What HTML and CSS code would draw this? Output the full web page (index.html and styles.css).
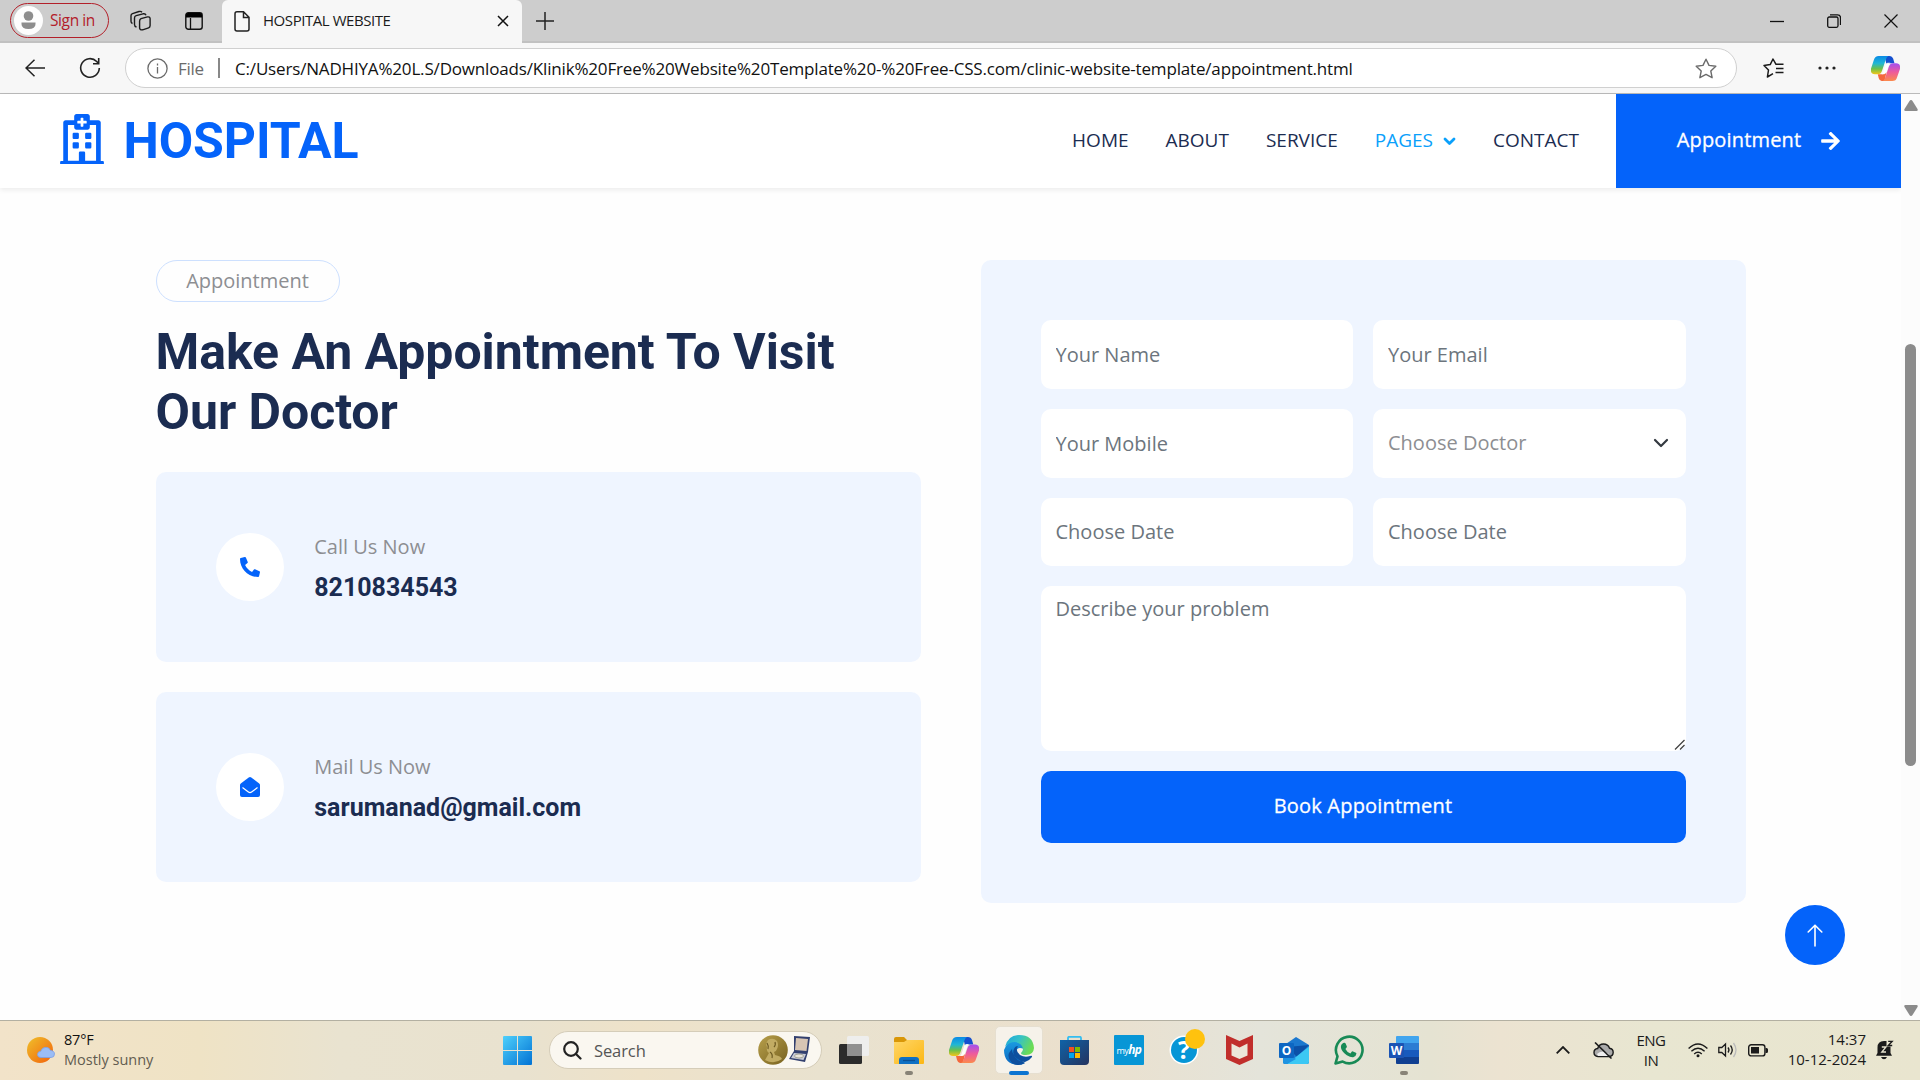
FILE: index.html
```html
<!DOCTYPE html>
<html lang="en">
<head>
<meta charset="utf-8">
<title>HOSPITAL WEBSITE</title>
<link rel="stylesheet" href="styles.css">
</head>
<body>
<svg width="0" height="0" class="defs">
  <defs>
    <linearGradient id="cpA" x1="0" y1="0" x2="0" y2="1"><stop offset="0" stop-color="#0a8ae6"/><stop offset=".4" stop-color="#1fb6d6"/><stop offset=".7" stop-color="#6cc04a"/><stop offset="1" stop-color="#f5c518"/></linearGradient>
    <linearGradient id="cpB" x1="0" y1="0" x2="0" y2="1"><stop offset="0" stop-color="#a14ff0"/><stop offset=".5" stop-color="#ee5a9c"/><stop offset="1" stop-color="#fb8a4c"/></linearGradient>
    <linearGradient id="edA" x1="0" y1="0" x2="1" y2=".4"><stop offset="0" stop-color="#1aa5dc"/><stop offset=".5" stop-color="#35c1c8"/><stop offset="1" stop-color="#6bdc55"/></linearGradient>
    <linearGradient id="edB" x1="0" y1="0" x2="0" y2="1"><stop offset="0" stop-color="#1b9de2"/><stop offset="1" stop-color="#0b66c0"/></linearGradient>
    <linearGradient id="sun" x1="0" y1="0" x2="1" y2="1"><stop offset="0" stop-color="#efc02b"/><stop offset="1" stop-color="#f2610c"/></linearGradient>
    <linearGradient id="win" x1="0" y1="0" x2="1" y2="1"><stop offset="0" stop-color="#4fd0fb"/><stop offset="1" stop-color="#0172d4"/></linearGradient>
    <linearGradient id="fold" x1="0" y1="0" x2="1" y2="1"><stop offset="0" stop-color="#ffd667"/><stop offset="1" stop-color="#fcb714"/></linearGradient>
    <linearGradient id="coin" x1="0" y1="0" x2="1" y2="1"><stop offset="0" stop-color="#b8a04c"/><stop offset="1" stop-color="#77611e"/></linearGradient>
    <linearGradient id="store" x1="0" y1="0" x2="1" y2="1"><stop offset="0" stop-color="#0f63a8"/><stop offset="1" stop-color="#25345f"/></linearGradient>
    <symbol id="copilot" viewBox="0 0 30 28">
      <path fill="#1450cf" d="M14 1h5q3 0 4 3l1.300 4.500H20l-4 1z"/>
      <path fill="#f4673c" d="M7 20h5l4-2-2 9h-3q-2 0-3-3z"/>
      <path fill="url(#cpA)" d="M8 1h10q-2 1-2.800 4l-3.700 11q-1.200 4-4.500 4H4q-5 0-4-6L3 5q1-4 5-4z"/>
      <path fill="url(#cpB)" d="M22 27H12q2-1 2.800-4l3.700-11q1.200-3.500 4.500-3.500h3q5 0 4 6l-3 8.500q-1 4-5 4z"/>
      <path fill="#fff" d="M15.300 9.500q.7-1.500 2.200-1.500H20q-1.200 1-1.800 3l-2.400 7q-.7 2-2.300 2H11q1-.8 1.500-2z" opacity=".9"/>
    </symbol>
  </defs>
</svg>

<header class="tabbar">
  <div class="signin">
    <svg width="29" height="29" viewBox="0 0 29 29"><circle cx="14.500" cy="14.500" r="14.500" fill="#fdfdfd"/><circle cx="14.500" cy="10" r="4.800" fill="#8d8d8d"/><path d="M7.500 16.500h14v1.500q0 5-7 5t-7-5z" fill="#8d8d8d"/></svg>
    <span>Sign in</span>
  </div>
  <svg class="ic-spaces" width="22" height="22" viewBox="0 0 22 22" fill="none" stroke="#1b1b1b" stroke-width="1.400" stroke-linejoin="round"><path d="M11 8.700l6.500-1.800q2.300-.4 2.600 1.600v7q0 1.800-1.500 2.300l-6 2q-2.600.5-3-1.600v-7q0-1.800 1.400-2.500zM6.500 17q-2-.5-2-2.500V8q0-1.800 1.700-2.300L13 3.800q2.400-.5 3 1.400M2.500 13.500q-1.500-.7-1.500-2.200V5.800q0-1.600 1.500-2.200L9 1.500q2-.5 3 .7"/></svg>
  <svg class="ic-tabs" width="18" height="18" viewBox="0 0 18 18"><rect x=".8" y=".8" width="16.400" height="16.400" rx="2.500" fill="none" stroke="#111" stroke-width="1.400"/><path d="M1 2.500Q1 1 3 1h12q2 0 2 1.500V5.500H1z" fill="#000"/><path d="M5.500 6v11" stroke="#111" stroke-width="1.300"/></svg>
  <div class="tab">
    <svg width="16" height="21" viewBox="0 0 16 21" fill="none" stroke="#222" stroke-width="1.500"><path d="M3 .8h6.500L15 6.300V18q0 2-2 2H3q-2 0-2-2V2.800q0-2 2-2zM9.500 1v5.500H15"/></svg>
    <span>HOSPITAL WEBSITE</span>
    <svg class="tab-x" width="12" height="12" viewBox="0 0 12 12" stroke="#111" stroke-width="1.500"><path d="M1 1l10 10M11 1L1 11"/></svg>
  </div>
  <svg class="ic-plus" width="18" height="18" viewBox="0 0 18 18" stroke="#222" stroke-width="1.500"><path d="M9 0v18M0 9h18"/></svg>
  <div class="winctl">
    <svg width="14" height="14" viewBox="0 0 14 14" stroke="#111" stroke-width="1.300"><path d="M0 7.500h14"/></svg>
    <svg width="14" height="14" viewBox="0 0 14 14" fill="none" stroke="#111" stroke-width="1.300"><rect x=".7" y="3" width="10.300" height="10.300" rx="1.500"/><path d="M3 .8h7.500q3 0 3 3V11"/></svg>
    <svg width="14" height="14" viewBox="0 0 14 14" stroke="#111" stroke-width="1.200"><path d="M.5.500l13 13M13.500.500l-13 13"/></svg>
  </div>
</header>

<div class="toolbar">
  <svg class="ic-back" width="20" height="18" viewBox="0 0 20 18" fill="none" stroke="#222" stroke-width="1.500"><path d="M20 9H1M9.500.700L1 9l8.500 8.300"/></svg>
  <svg class="ic-reload" width="22" height="22" viewBox="0 0 22 22" fill="none" stroke="#222" stroke-width="1.600"><path d="M20.300 11a9.300 9.300 0 1 1-2.600-6.500l1.800 2M19.700 1v5.700H14"/></svg>
  <div class="address">
    <svg width="21" height="21" viewBox="0 0 21 21" fill="none" stroke="#6b6b6b" stroke-width="1.300"><circle cx="10.500" cy="10.500" r="9.600"/><path d="M10.500 9v6.500M10.500 5.500v2"/></svg>
    <span class="scheme">File</span>
    <i class="sep"></i>
    <span class="url">C:/Users/NADHIYA%20L.S/Downloads/Klinik%20Free%20Website%20Template%20-%20Free-CSS.com/clinic-website-template/appointment.html</span>
    <svg class="ic-star" width="22" height="21" viewBox="0 0 22 21" fill="none" stroke="#6b6b6b" stroke-width="1.400" stroke-linejoin="round"><path d="M11 1.200l3 6.200 6.800.900-5 4.700 1.300 6.700-6.100-3.300-6.100 3.300 1.300-6.700-5-4.700L8 7.400z"/></svg>
  </div>
  <svg class="ic-favs" width="21" height="20" viewBox="0 0 21 20" fill="none" stroke="#1b1b1b" stroke-width="1.500" stroke-linejoin="round"><path d="M20.500 6.300h-7.500L10 1 7.200 6.600 1 7.500l4.500 4.500L4.400 19l5.600-3.300M13 10.500h7.500M12.500 14.500h8"/></svg>
  <svg class="ic-dots" width="18" height="4" viewBox="0 0 18 4" fill="#222"><circle cx="2" cy="2" r="1.600"/><circle cx="9" cy="2" r="1.600"/><circle cx="16" cy="2" r="1.600"/></svg>
  <svg class="ic-cp" width="29" height="27"><use href="#copilot"/></svg>
</div>

<div class="viewport">
  <div class="page">
    <nav class="navbar">
      <svg class="brand-icon" width="44" height="50" viewBox="0 0 448 512" fill="#0463fa"><path d="M448 492v20H0v-20c0-6.600 5.400-12 12-12h20V88c0-13.300 10.700-24 24-24h88V24c0-13.300 10.700-24 24-24h112c13.300 0 24 10.700 24 24v40h88c13.300 0 24 10.700 24 24v392h20c6.600 0 12 5.400 12 12z"/><path fill="#fff" d="M80 112h64v24c0 13 11 24 24 24h112c13 0 24-11 24-24v-24h64v367H80z"/><path d="M128 204q0-12 12-12h40q12 0 12 12v40q0 12-12 12h-40q-12 0-12-12zM256 204q0-12 12-12h40q12 0 12 12v40q0 12-12 12h-40q-12 0-12-12zM128 300q0-12 12-12h40q12 0 12 12v40q0 12-12 12h-40q-12 0-12-12zM256 300q0-12 12-12h40q12 0 12 12v40q0 12-12 12h-40q-12 0-12-12zM192 480v-84q0-12 12-12h40q12 0 12 12v84z"/><path fill="#fff" d="M182 70h28V44q0-6 6-6h16q6 0 6 6v26h28q6 0 6 6v16q0 6-6 6h-28v26q0 6-6 6h-16q-6 0-6-6V98h-28q-6 0-6-6V76q0-6 6-6z"/></svg>
      <span class="brand">HOSPITAL</span>
      <div class="links">
        <a>HOME</a><a>ABOUT</a><a>SERVICE</a>
        <a class="active">PAGES<svg width="13" height="9" viewBox="0 0 13 9" fill="none" stroke="#0aa0fb" stroke-width="2.800" stroke-linecap="round" stroke-linejoin="round"><path d="M2 2l4.500 4.500L11 2"/></svg></a>
        <a>CONTACT</a>
      </div>
      <a class="cta"><span>Appointment</span><svg width="19" height="18" viewBox="0 0 448 432" fill="#fff"><path transform="translate(0 -40)" d="M190.500 66.900l22.200-22.200c9.400-9.400 24.600-9.400 33.900 0L441 239c9.400 9.400 9.400 24.600 0 33.900L246.600 467.300c-9.400 9.400-24.600 9.400-33.900 0l-22.200-22.200c-9.500-9.500-9.300-25 .400-34.300L311.400 296H24c-13.300 0-24-10.700-24-24v-32c0-13.300 10.700-24 24-24h287.400L190.900 101.200c-9.800-9.300-10-24.800-.400-34.300z"/></svg></a>
    </nav>
    <main class="content">
      <section class="info">
        <p class="pill">Appointment</p>
        <h1>Make An Appointment To Visit Our Doctor</h1>
        <div class="card">
          <div class="round"><svg width="20" height="20" viewBox="0 0 512 512" fill="#0463fa"><path d="M493.400 24.600l-104-24c-11.300-2.600-22.900 3.300-27.500 13.900l-48 112c-4.200 9.800-1.400 21.300 6.900 28l60.600 49.600c-36 76.700-98.900 140.500-177.200 177.200l-49.600-60.600c-6.800-8.300-18.200-11.100-28-6.900l-112 48C3.900 366.500-2 378.100.600 389.400l24 104C27.100 504.200 36.700 512 48 512c256.100 0 464-207.500 464-464 0-11.200-7.700-20.900-18.600-23.400z" transform="matrix(-1 0 0 1 512 0)"/></svg></div>
          <div class="who"><p>Call Us Now</p><h5>8210834543</h5></div>
        </div>
        <div class="card">
          <div class="round"><svg width="20" height="20" viewBox="0 0 20 20"><path fill="#0463fa" d="M0 8q0-1 .8-1.600L8.700.500Q10-.4 11.300.500l7.900 5.900Q20 7 20 8v10q0 2-2 2H2q-2 0-2-2z"/><path fill="none" stroke="#fff" stroke-width="1.200" stroke-linecap="round" d="M2.800 10.800l5.600 4.300q1.600 1.200 3.200 0l5.600-4.300"/></svg></div>
          <div class="who"><p>Mail Us Now</p><h5>sarumanad@gmail.com</h5></div>
        </div>
      </section>
      <form class="form">
        <input placeholder="Your Name"><input placeholder="Your Email">
        <input placeholder="Your Mobile">
        <div class="select"><span>Choose Doctor</span><svg width="16" height="10" viewBox="0 0 16 10" fill="none" stroke="#343a40" stroke-width="2.200" stroke-linecap="round" stroke-linejoin="round"><path d="M2 2l6 6 6-6"/></svg></div>
        <input class="date" placeholder="Choose Date"><input class="date" placeholder="Choose Date">
        <div class="area">
          <textarea placeholder="Describe your problem"></textarea>
          <svg class="grip" width="11" height="11" viewBox="0 0 11 11" fill="none" stroke="#444" stroke-width="1.300"><path d="M1 10.500L10.500 1M6 10.500L10.500 6"/></svg>
        </div>
        <button type="button">Book Appointment</button>
      </form>
      <a class="totop"><svg width="16" height="23" viewBox="0 0 16 23" fill="none" stroke="#fff" stroke-width="1.600" stroke-linecap="round" stroke-linejoin="round"><path d="M8 22V1.200M1.200 8L8 1.200 14.800 8"/></svg></a>
    </main>
  </div>
  <div class="scrollbar">
    <svg width="14" height="11" viewBox="0 0 14 11"><path fill="#8b8b8b" d="M7 0q1 0 1.500 1L13.500 9q.800 2-1 2h-11q-1.800 0-1-2L5.500 1Q6 0 7 0z"/></svg>
    <i class="thumb"></i>
    <svg width="14" height="11" viewBox="0 0 14 11"><path fill="#8b8b8b" d="M7 11q1 0 1.500-1L13.500 2q.800-2-1-2h-11q-1.800 0-1 2L5.500 10q.500 1 1.500 1z"/></svg>
  </div>
</div>

<footer class="taskbar">
  <div class="weather">
    <svg width="28" height="26" viewBox="0 0 28 26"><circle cx="13" cy="13" r="13" fill="url(#sun)"/><path fill="#9bbdf5" stroke="#7c9fe6" stroke-width=".8" d="M14 20.500q-3.500 0-3.500-3 0-3 3.200-3.200 1.300-4 5.300-4 3.300 0 4.300 3 4.200.500 4.200 3.700 0 3.500-3.500 3.500z"/></svg>
    <div class="forecast"><b>87°F</b><span>Mostly sunny</span></div>
  </div>
  <svg class="start" width="29" height="29" viewBox="0 0 29 29" fill="url(#win)"><path d="M1 0h13v14H0V1q0-1 1-1zM15 0h13q1 0 1 1v13H15zM0 15h14v14H1q-1 0-1-1zM15 15h14v13q0 1-1 1H15z"/></svg>
  <div class="search">
    <svg width="19" height="19" viewBox="0 0 19 19" fill="none" stroke="#222" stroke-width="2.200" stroke-linecap="round"><circle cx="8" cy="8" r="6.800"/><path d="M13 13l4.500 4.500"/></svg>
    <span>Search</span>
    <svg width="54" height="30" viewBox="0 0 54 30"><circle cx="15" cy="15" r="14.800" fill="url(#coin)"/><path fill="#c2ac63" d="M10 5q5-3 9 1 2 4 0 8-1 3-3 3l1 3q6 1 7 4-8 6-17 1l4-7q-3-2-2-6-2-3 1-7z"/><path d="M9 8q2 3 1 6M17 7q1 3-1 5M12 17q3 2 2 6" fill="none" stroke="#6d5a22" stroke-width="1.200"/><path fill="#33406f" d="M36 1l16 1-2 15-3 10-16-3 5-8z"/><path fill="#d7c5b4" d="M38 3l12 1-1.500 12L37 15z"/><path fill="#c9cbd6" d="M36 18l12 1-2.500 6L33 23z"/><ellipse cx="41" cy="21" rx="4.500" ry="2" fill="#e8e4dc" stroke="#887" stroke-width=".7"/></svg>
  </div>
  <div class="apps">
    <div class="app"><svg width="30" height="28" viewBox="0 0 30 28"><rect x="0" y="8" width="23" height="20" rx="1.500" fill="#2b2b2b"/><rect x="8" y="0" width="22" height="20" rx="1.500" fill="#eee" opacity=".95"/><path d="M8 8h15v12H8z" fill="#909090"/></svg></div>
    <div class="app"><svg width="30" height="27" viewBox="0 0 30 27"><path fill="#d99708" d="M0 2q0-2 2-2h8l3 3h15v8H0z"/><path fill="url(#fold)" d="M0 5h10l3-2h16q1 0 1 1v22q0 1-1 1H1q-1 0-1-1z"/><path fill="#0f70c4" d="M5 27v-4q0-3 3-3h14q3 0 3 3v4z"/><path d="M9 23.500h12" stroke="#0b4f94" stroke-width="1.300"/></svg><i class="dot"></i></div>
    <div class="app"><svg width="30" height="28"><use href="#copilot"/></svg></div>
    <div class="app current"><svg width="30" height="30" viewBox="0 0 30 30"><path fill="url(#edB)" d="M1 13Q4 5 12 6q7 1 8 8-7-3-8 3 0 7 9 11-3 2-7 2Q0 29 0 15z"/><path fill="#0d4f9e" d="M10 14q-2 4 1 8 4 5 10 5 4-1 7-5 .5-2-2-1-5 2-10-1-4-3-3-7l1-2q-3 0-4 3zm-2 14q-5-5-3-10l3-4q0 9 13 14-7 4-13 0z"/><path fill="url(#edA)" d="M1 12Q4 0 15 0q14 0 15 13-.500 7-8 7-5 0-5-2 2-2 2-4-1-6-8-7-6 0-10 5z"/></svg><i class="bar"></i></div>
    <div class="app"><svg width="29" height="29" viewBox="0 0 29 29"><path d="M8 6V2q0-1.200 1.200-1.200h10.600Q21 .8 21 2v4" fill="none" stroke="#35bdf0" stroke-width="1.800"/><path fill="url(#store)" d="M0 4h29v21q0 4-4 4H4q-4 0-4-4z"/><path fill="#f25022" d="M9 11h5v5H9z"/><path fill="#7fba00" d="M15 11h5v5h-5z"/><path fill="#00a4ef" d="M9 17h5v5H9z"/><path fill="#ffb900" d="M15 17h5v5h-5z"/></svg></div>
    <div class="app"><span class="myhp">my<b>hp</b></span></div>
    <div class="app"><svg class="help" width="44" height="44" viewBox="0 0 44 44"><circle cx="22" cy="22" r="14.500" fill="#fff"/><circle cx="22" cy="22" r="13" fill="#0796d6"/><text x="22" y="31" text-anchor="middle" class="qmark">?</text><circle cx="33" cy="11" r="10" fill="#ffc20e"/></svg></div>
    <div class="app"><svg width="27" height="30" viewBox="0 0 27 30"><path fill="#c12e2b" d="M0 0l13.500 6L27 0v24l-13.500 6L0 24z"/><path fill="#ece6d8" d="M5.500 8.500l8 4 8-4v12l-8 3.500-8-3.500z"/></svg></div>
    <div class="app"><svg width="30" height="27" viewBox="0 0 30 27"><path fill="#1b78cf" d="M4 9L17 0l13 8v17q0 2-2 2H6q-2 0-2-2z"/><path fill="#0b50a8" d="M8 10L30 8 18 20z"/><path fill="#3cc8f4" d="M30 9.500v15q0 2.500-2 2.500H8z"/><path fill="#1e94e2" d="M4 13l13 9-9 5H6q-2 0-2-2z"/><rect x="0" y="6" width="15" height="15" rx="1" fill="#0d66c2"/><text x="7.500" y="18" text-anchor="middle" class="mark">O</text></svg></div>
    <div class="app"><svg width="30" height="30" viewBox="0 0 30 30"><path d="M1.500 28.500l2-7.200A13.300 13.300 0 1 1 8.700 26.600z" fill="none" stroke="#188a56" stroke-width="2.600" stroke-linejoin="round"/><path fill="#188a56" d="M10.500 7.800q.8 0 1.100.8l1.200 2.700q.2.600-.2 1.200l-1.200 1.400q1.600 3.200 5 4.500l1.500-1.800q.5-.5 1.100-.2l2.900 1.400q.6.300.5 1-.3 2.800-3.200 3.400-2.400.400-6.400-2-4.800-3.200-5.800-7.200-.6-3.500 2.200-5.100.6-.2 1.300-.1z"/></svg></div>
    <div class="app"><svg width="30" height="28" viewBox="0 0 30 28"><path fill="#41a5ee" d="M7 1q0-1 1-1h21q1 0 1 1v6H7z"/><path fill="#2b7cd3" d="M7 7h23v7H7z"/><path fill="#185abd" d="M7 14h23v7H7z"/><path fill="#103f91" d="M7 21h23v6q0 1-1 1H8q-1 0-1-1z"/><rect y="7" width="15" height="15" rx="1" fill="#1b54b4"/><text x="7.500" y="18.800" text-anchor="middle" class="mark">W</text></svg><i class="dot"></i></div>
  </div>
  <div class="tray">
    <svg width="14" height="8" viewBox="0 0 14 8" fill="none" stroke="#1b1b1b" stroke-width="1.800"><path d="M.7 7.300L7 1l6.300 6.300"/></svg>
    <svg class="ic-cloud" width="21" height="17" viewBox="0 0 21 17"><path fill="#aaa" stroke="#1b1b1b" stroke-width="1.400" d="M5 14.500q-4-.3-4-4 0-3.500 3.700-4Q6 2 10.500 2t6 4.200q3.700.5 3.700 4.200-.2 3.800-4 4.100z"/><path fill="#eee" d="M4 12q5-5 12 0l-1 2H5z"/><path d="M2 .5L18.500 16.500" stroke="#1b1b1b" stroke-width="1.600"/></svg>
    <div class="lang"><span>ENG</span><span>IN</span></div>
    <svg class="ic-wifi" width="20" height="15" viewBox="0 0 20 15" fill="none" stroke="#1b1b1b" stroke-width="1.400"><path d="M.6 5.500Q10-3.500 19.400 5.500M3.400 8.300q6.600-6 13.200 0M6.200 11q3.800-3.300 7.600 0"/><circle cx="10" cy="12.800" r="1.500" fill="#1b1b1b" stroke="none"/></svg>
    <svg class="ic-vol" width="20" height="16" viewBox="0 0 20 16" fill="none" stroke="#1b1b1b" stroke-width="1.300"><path d="M.8 5.500h3L7.500 2v12L3.800 10.500h-3zM10 5.500q2 2.500 0 5M12.500 3.500q3.500 4.500 0 9"/><path d="M15.500 1q5 7 0 14" stroke="#bbb"/></svg>
    <svg class="ic-bat" width="20" height="13" viewBox="0 0 20 13"><rect x=".7" y=".7" width="16.200" height="11.200" rx="2.500" fill="none" stroke="#1b1b1b" stroke-width="1.400"/><path fill="#1b1b1b" d="M3 3h8v6.600H3zM17.500 4h1q1.500 0 1.500 1.500v2Q20 9 18.500 9h-1z"/></svg>
    <div class="clock"><span>14:37</span><span>10-12-2024</span></div>
    <svg class="ic-bell" width="18" height="20" viewBox="0 0 18 20"><path fill="#1b1b1b" d="M1.500 13V7.500Q1.500 1 8 1h2.500v5.500h4V13l1.500 2.800H0zM5 17h6q-1 2.200-3 2.200T5 17z"/><path d="M5.800 7H10l-4.200 5H10" fill="none" stroke="#e8e4d0" stroke-width="1.300"/><path d="M12.200 1.300h4L12.200 5.500h4" fill="none" stroke="#1b1b1b" stroke-width="1.300"/></svg>
  </div>
</footer>
</body>
</html>
```
FILE: styles.css
```css
* { box-sizing: border-box; }
body {
  margin: 0;
  width: 1920px;
  height: 1080px;
  overflow: hidden;
  display: flex;
  flex-direction: column;
  font-family: "Open Sans", "Noto Sans", sans-serif;
  background: #fefefe;
}
svg { display: block; flex: none; }
svg.defs { position: absolute; }
p, h1, h5 { margin: 0; }

/* Browser tab strip */
.tabbar {
  height: 43px;
  flex: none;
  display: flex;
  align-items: center;
  background: #cdcdcd;
  border-bottom: 2px solid #c1c1c1;
  padding-left: 10px;
}
.signin {
  width: 99px;
  height: 35px;
  display: flex;
  align-items: center;
  gap: 7px;
  padding: 0 0 1px 3px;
  border: 1.500px solid #b3202a;
  border-radius: 18px;
  color: #b3202a;
  font-size: 15.500px;
  letter-spacing: -0.4px;
  white-space: nowrap;
}
.ic-spaces { margin-left: 21px; }
.ic-tabs { margin-left: 33px; }
.tab {
  align-self: flex-start;
  width: 300px;
  height: 43px;
  margin-left: 19px;
  padding: 0 13px 1px 12px;
  display: flex;
  align-items: center;
  gap: 13px;
  background: #f7f7f7;
  border-radius: 6px 6px 0 0;
  font-size: 15px;
  letter-spacing: -0.44px;
  color: #1b1b1b;
  white-space: nowrap;
}
.tab span { padding-bottom: 2px; }
.tab-x { margin-left: auto; }
.ic-plus { margin-left: 14px; }
.winctl { margin-left: auto; margin-right: 22px; display: flex; gap: 43px; }

/* Address row */
.toolbar {
  height: 51px;
  flex: none;
  display: flex;
  align-items: center;
  background: #f7f7f7;
  border-bottom: 1px solid #bababa;
  padding-left: 25px;
}
.ic-reload { margin-left: 34px; }
.address {
  width: 1612px;
  height: 40px;
  margin-left: 24px;
  padding: 0 19px 0 21px;
  display: flex;
  align-items: center;
  background: #fff;
  border: 1px solid #d0d0d0;
  border-radius: 20px;
  font-size: 17px;
  white-space: nowrap;
}
.scheme { width: 40px; margin-left: 10px; color: #6b6b6b; letter-spacing: -0.3px; }
.sep { width: 2px; height: 20px; background: #888; }
.url { margin-left: 15px; color: #111; letter-spacing: -0.17px; }
.ic-star { margin-left: auto; }
.ic-favs { margin-left: 26px; }
.ic-dots { margin-left: 34px; }
.ic-cp { margin-left: 35px; }

/* Web page */
.viewport { height: 926px; flex: none; display: flex; }
.page { width: 1901px; }
.navbar {
  height: 94px;
  display: flex;
  align-items: center;
  padding-left: 60px;
  background: #fff;
  box-shadow: 0 2px 5px rgba(0, 0, 0, .075);
}
.brand-icon { margin-bottom: 4px; }
.brand {
  margin-left: 19.500px;
  font: bold 50px/60px Roboto, sans-serif;
  letter-spacing: -0.1px;
  color: #0463fa;
}
.links {
  margin-left: auto;
  display: flex;
  gap: 37px;
  margin: 0 37px 2px auto;
  font-size: 19px;
  color: #1b2c51;
}
.links a { display: flex; align-items: center; gap: 10px; }
.links .active { color: #0aa0fb; }
.links svg { margin-top: 2px; }
.cta {
  width: 285px;
  height: 94px;
  display: flex;
  align-items: center;
  justify-content: center;
  gap: 20px;
  padding-bottom: 1px;
  background: #0463fa;
  color: #fff;
  font-size: 20px;
  letter-spacing: .18px;
  -webkit-text-stroke: .3px #fff;
}
.cta span { padding-bottom: 2px; }
.content {
  position: relative;
  display: grid;
  grid-template-columns: 765px 765px;
  gap: 60px;
  align-items: start;
  padding: 72px 0 0 155.500px;
}
.pill {
  width: 184px;
  height: 42px;
  border: 1px solid #cde0fe;
  border-radius: 21px;
  color: #8d8e92;
  font-size: 20px;
  line-height: 40px;
  text-align: center;
}
h1 {
  margin-top: 20px;
  font: bold 50px/60px Roboto, sans-serif;
  letter-spacing: -0.05px;
  color: #1b2c51;
}
.card {
  height: 190px;
  margin-top: 30px;
  padding-left: 60px;
  display: flex;
  align-items: center;
  gap: 30px;
  background: #eff5ff;
  border-radius: 10px;
}
.round {
  width: 68.750px;
  height: 68.750px;
  border-radius: 50%;
  background: #fff;
  display: grid;
  place-items: center;
}
.who { padding-top: 1px; }
.who p { font-size: 20px; line-height: 30px; color: #8d8e92; margin-bottom: 11px; }
.who h5 { font: bold 25px/30px Roboto, sans-serif; color: #1b2c51; }

.form {
  height: 643px;
  padding: 60px;
  display: grid;
  grid-template-columns: 1fr 1fr;
  grid-template-rows: 68.750px 68.750px 68.750px 165px 72px;
  gap: 20px;
  background: #eff5ff;
  border-radius: 10px;
}
.form input, .form textarea, .select {
  min-width: 0;
  width: 100%;
  border: 0;
  border-radius: 10px;
  background: #fff;
  padding: 2px 15px 0;
  font: 20px/30px "Open Sans", sans-serif;
}
.form .date { padding-top: 0; }
.area { grid-column: 1 / -1; position: relative; }
.form textarea { display: block; height: 100%; padding: 8px 15px; resize: none; }
.grip { position: absolute; right: 1px; bottom: 1px; }
.form ::placeholder { color: #6c757d; opacity: 1; }
.select {
  display: flex;
  align-items: center;
  justify-content: space-between;
  padding: 0 17px 0 15px;
  color: #8d8e92;
}
.form button {
  grid-column: 1 / -1;
  border: 0;
  border-radius: 10px;
  padding: 0 0 2px;
  background: #0463fa;
  color: #fff;
  font: 20px/30px "Open Sans", sans-serif;
  letter-spacing: .2px;
  -webkit-text-stroke: .3px #fff;
}
.totop {
  position: absolute;
  left: 1785px;
  top: 717px;
  width: 60px;
  height: 60px;
  border-radius: 50%;
  background: #0463fa;
  display: grid;
  place-items: center;
}
.scrollbar {
  width: 19px;
  background: #fcfcfc;
  display: flex;
  flex-direction: column;
  align-items: center;
  justify-content: space-between;
  padding: 6px 0 4px;
}
.thumb {
  width: 11px;
  height: 422px;
  margin-top: -6px;
  border-radius: 6px;
  background: #8b8b8b;
}

/* Windows taskbar */
.taskbar {
  height: 60px;
  flex: none;
  display: flex;
  align-items: center;
  border-top: 1px solid #b3b0a2;
  background: linear-gradient(90deg, #f2e3c9 0, #efe3c5 200px, #e9e3d0 340px, #e9e2cf 520px, #eee2c9 640px, #e9e2cf 820px, #ebe0cd 1080px, #e4e4da 1260px, #e5e3d2 1430px, #ece3d1 1500px, #e8e6d1 1650px, #e9e5cf 1920px);
  padding: 0 0 1px 27px;
}
.weather { width: 476px; display: flex; align-items: center; gap: 9px; font-size: 14.500px; line-height: 20px; }
.weather b, .weather span { display: block; font-weight: 400; }
.weather b { color: #111; letter-spacing: -0.2px; }
.weather span { color: #625c50; }
.forecast { padding-bottom: 1px; }
.search {
  width: 273px;
  height: 38px;
  margin-left: 17px;
  padding: 0 9px 0 13px;
  display: flex;
  align-items: center;
  background: #faf7f0;
  border: 1px solid #d5cdb9;
  border-radius: 19px;
}
.search span { margin: 0 auto 0 12px; font-size: 16.500px; color: #555; letter-spacing: -0.1px; }
.apps { display: flex; margin-left: 4.500px; }
.app {
  position: relative;
  width: 55px;
  height: 59px;
  display: grid;
  place-items: center;
}
.app > svg, .app > span { position: relative; z-index: 1; }
.current::before {
  content: "";
  position: absolute;
  inset: 5px 3.500px 6px;
  border-radius: 5px;
  background: #f6f2ea;
  border: 1px solid #e6dfd0;
}
.dot, .bar { position: absolute; z-index: 2; left: 50%; transform: translateX(-50%); border-radius: 2px; }
.dot { bottom: 5px; width: 8px; height: 4px; background: #888377; }
.bar { bottom: 5px; width: 20px; height: 4px; background: #0b74d1; }
.myhp {
  width: 30px;
  height: 30px;
  background: #0796d6;
  border-radius: 1px;
  color: #fff;
  font-size: 9px;
  line-height: 29px;
  text-align: center;
  letter-spacing: -0.6px;
}
.myhp b { font-size: 12px; font-style: italic; }
.help { overflow: visible; }
.qmark { font: bold 25px "Open Sans", sans-serif; fill: #fff; }
.mark { font: bold 12px "Open Sans", sans-serif; fill: #fff; }
.tray { display: flex; align-items: center; margin: 0 26px 0 auto; font-size: 15px; line-height: 20px; color: #1b1b1b; }
.tray span { display: block; }
.ic-cloud { margin-left: 23px; }
.lang { width: 34px; margin-left: 20px; text-align: center; letter-spacing: -0.5px; }
.ic-wifi { margin-left: 20px; }
.ic-vol { margin-left: 10px; }
.ic-bat { margin-left: 10px; }
.clock { width: 90px; margin-left: 8px; padding-bottom: 2px; text-align: right; letter-spacing: 0; white-space: nowrap; }
.ic-bell { margin-left: 10px; }
```
